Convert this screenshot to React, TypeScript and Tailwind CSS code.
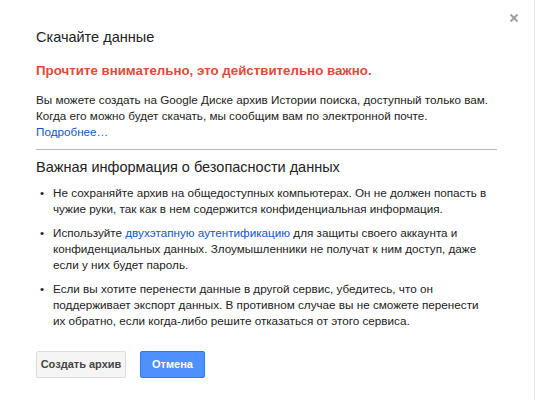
import React from "react";

export default function App() {
  return (
    <div className="w-[537px] h-[400px] bg-white font-['Liberation_Sans',Arial,sans-serif] text-[#222]">
      <div className="relative w-[535px] h-[400px] border-r border-[#e4e4e4] pl-[36px] pr-[37px] pt-[27px]">
        <button className="absolute left-[509px] top-[13px] w-[10px] h-[10px] flex items-center justify-center">
          <svg width="10" height="10" viewBox="0 0 10 10">
            <path d="M1.5 1.5 L8.5 8.5 M8.5 1.5 L1.5 8.5" stroke="#a0a0a0" strokeWidth="2" />
          </svg>
        </button>
        <h1 className="text-[14.5px] leading-[20px] font-normal text-[#222]">Скачайте данные</h1>
        <p className="mt-[16px] text-[13.3px] leading-[16px] font-bold text-[#dd4b39]">
          Прочтите внимательно, это действительно важно.
        </p>
        <p className="mt-[13px] text-[11.7px] leading-[16px] text-[#222]">
          Вы можете создать на Google Диске архив Истории поиска, доступный только вам.
          <br />
          Когда его можно будет скачать, мы сообщим вам по электронной почте.
          <br />
          <a className="text-[#15c]">Подробнее…</a>
        </p>
        <div className="mt-[9px] h-px bg-[#b8b8b8]" />
        <h2 className="mt-[7px] text-[14.5px] leading-[20px] font-normal text-[#222]">
          Важная информация о безопасности данных
        </h2>
        <ul className="mt-[8px] pr-[8px] flex flex-col gap-[8px] text-[11.7px] leading-[16px] text-[#222]">
          <li className="flex">
            <span className="w-[17px] shrink-0 flex justify-start pl-[4px]">•</span>
            <span>
              Не сохраняйте архив на общедоступных компьютерах. Он не должен попасть в чужие руки, так как в нем содержится конфиденциальная информация.
            </span>
          </li>
          <li className="flex">
            <span className="w-[17px] shrink-0 flex justify-start pl-[4px]">•</span>
            <span>
              Используйте <a className="text-[#15c]">двухэтапную аутентификацию</a> для защиты своего аккаунта и конфиденциальных данных. Злоумышленники не получат к ним доступ, даже если у них будет пароль.
            </span>
          </li>
          <li className="flex">
            <span className="w-[17px] shrink-0 flex justify-start pl-[4px]">•</span>
            <span>
              Если вы хотите перенести данные в другой сервис, убедитесь, что он поддерживает экспорт данных. В противном случае вы не сможете перенести их обратно, если когда-либо решите отказаться от этого сервиса.
            </span>
          </li>
        </ul>
        <div className="mt-[22px] flex gap-[14px]">
          <button className="h-[27px] w-[90px] rounded-[2px] border border-[#dcdcdc] bg-[#f5f5f5] text-[11px] font-bold text-[#444]">
            Создать архив
          </button>
          <button className="h-[27px] w-[65px] rounded-[2px] border border-[#3079ed] bg-[#4d90fe] text-[11px] font-bold text-white">
            Отмена
          </button>
        </div>
      </div>
    </div>
  );
}
